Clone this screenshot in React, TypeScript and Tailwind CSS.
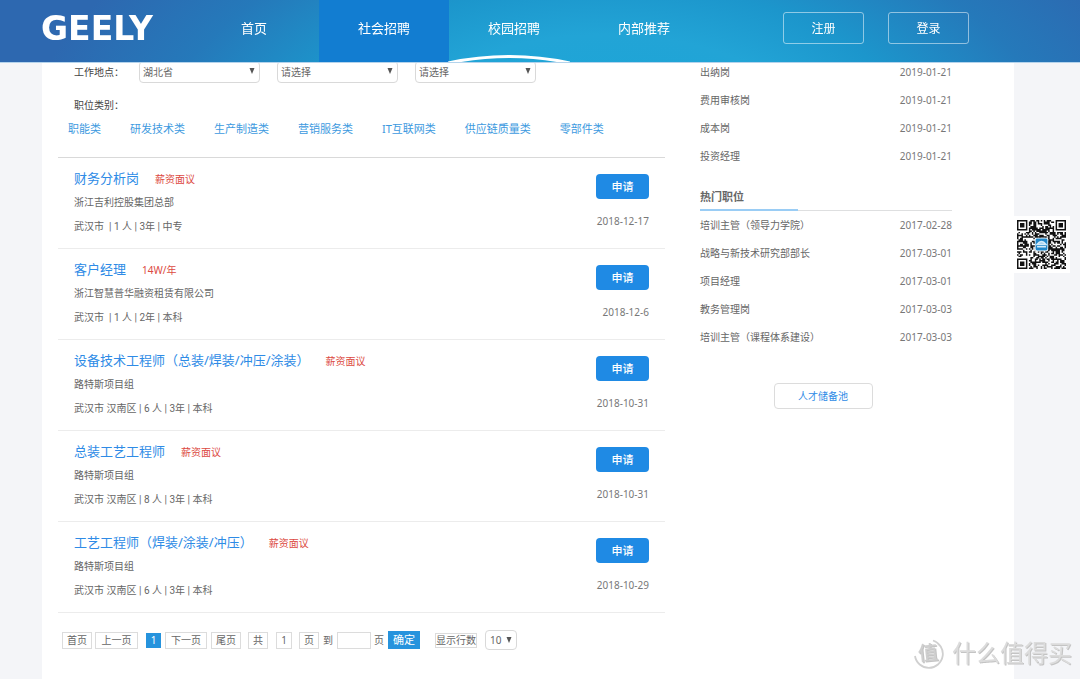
const NAV_ITEMS = ["首页", "社会招聘", "校园招聘", "内部推荐"];

const CATEGORIES = [
  "职能类",
  "研发技术类",
  "生产制造类",
  "营销服务类",
  "IT互联网类",
  "供应链质量类",
  "零部件类",
];

const LOCATIONS = [
  { id: "province", label: "省份", value: "湖北省" },
  { id: "city", label: "城市", value: "请选择" },
  { id: "district", label: "区县", value: "请选择" },
];

const JOBS = [
  {
    title: "财务分析岗",
    salary: "薪资面议",
    company: "浙江吉利控股集团总部",
    info: "武汉市  | 1 人 | 3年 | 中专",
    date: "2018-12-17",
  },
  {
    title: "客户经理",
    salary: "14W/年",
    company: "浙江智慧普华融资租赁有限公司",
    info: "武汉市  | 1 人 | 2年 | 本科",
    date: "2018-12-6",
  },
  {
    title: "设备技术工程师（总装/焊装/冲压/涂装）",
    salary: "薪资面议",
    company: "路特斯项目组",
    info: "武汉市 汉南区 | 6 人 | 3年 | 本科",
    date: "2018-10-31",
  },
  {
    title: "总装工艺工程师",
    salary: "薪资面议",
    company: "路特斯项目组",
    info: "武汉市 汉南区 | 8 人 | 3年 | 本科",
    date: "2018-10-31",
  },
  {
    title: "工艺工程师（焊装/涂装/冲压）",
    salary: "薪资面议",
    company: "路特斯项目组",
    info: "武汉市 汉南区 | 6 人 | 3年 | 本科",
    date: "2018-10-29",
  },
];

const LATEST = [
  { name: "出纳岗", date: "2019-01-21" },
  { name: "费用审核岗", date: "2019-01-21" },
  { name: "成本岗", date: "2019-01-21" },
  { name: "投资经理", date: "2019-01-21" },
];

const HOT = [
  { name: "培训主管（领导力学院）", date: "2017-02-28" },
  { name: "战略与新技术研究部部长", date: "2017-03-01" },
  { name: "项目经理", date: "2017-03-01" },
  { name: "教务管理岗", date: "2017-03-03" },
  { name: "培训主管（课程体系建设）", date: "2017-03-03" },
];

function Arrow() {
  return (
    <svg
      viewBox="0 0 6 6"
      className="pointer-events-none absolute top-[7px] right-[5px] size-1.5 fill-[#555]"
      aria-hidden="true"
    >
      <path d="M.5 0h5L3 6z" />
    </svg>
  );
}

function Header() {
  return (
    <header className="fixed inset-x-0 top-0 z-20 flex h-[63px] items-stretch border-b border-[#b4d3ec] bg-[radial-gradient(ellipse_56%_320px_at_56%_150px,#16a6d8_0%,#22a4d6_36%,#1c96cc_52%,#2579ba_74%,#2d68b0_96%)] pr-[111px] pl-[41px] text-white">
      <a
        href="#"
        className="flex w-[148px] items-center pb-1.5 font-['DejaVu_Sans',sans-serif] text-[33px] leading-none font-bold"
      >
        GEELY
      </a>
      <nav className="flex">
        {NAV_ITEMS.map((item) => (
          <a
            key={item}
            href="#"
            className={`flex w-[130px] items-center justify-center pb-1 text-[13px] ${
              item === "社会招聘" ? "bg-[#127dd1]" : "hover:bg-white/10"
            }`}
          >
            {item}
          </a>
        ))}
      </nav>
      <div className="ml-auto flex gap-6 pt-3">
        {["注册", "登录"].map((label) => (
          <button
            key={label}
            type="button"
            className="h-8 w-[81px] rounded-[3px] border border-white/50 pt-0.5 text-[12px]"
          >
            {label}
          </button>
        ))}
      </div>
      {/* Arc above the content edge */}
      <svg
        viewBox="0 0 122 7"
        className="absolute bottom-0 left-[448px] h-[7px] w-[122px]"
        fill="none"
        aria-hidden="true"
      >
        <path d="M0 8Q61-5 122 8" stroke="#fff" strokeWidth="3" />
      </svg>
    </header>
  );
}

function Filters() {
  return (
    <section className="pt-[3px]">
      <div className="flex items-center pl-4">
        <span className="w-[65px] text-[#444]">工作地点：</span>
        <div className="flex gap-[17px]">
          {LOCATIONS.map(({ id, label, value }) => (
            <div key={id} className="relative">
              <select
                aria-label={label}
                className="block h-[22px] w-[121px] appearance-none rounded border border-[#d9d9d9] bg-white pl-[3px] text-[10px] text-[#666]"
              >
                <option>{value}</option>
              </select>
              <Arrow />
            </div>
          ))}
        </div>
      </div>
      <p className="mt-3 pl-4 leading-5 text-[#444]">职位类别：</p>
      <nav className="mt-1 flex gap-[29px] pb-[18px] pl-2.5 text-[11px] leading-5 text-[#3d9ae0]">
        {CATEGORIES.map((category) => (
          <a key={category} href="#">
            {category}
          </a>
        ))}
      </nav>
    </section>
  );
}

function JobList() {
  return (
    <ul className="border-t border-[#d9d9d9]">
      {JOBS.map((job) => (
        <li
          key={job.title}
          className="flex justify-between border-b border-[#ececec] pt-2 pr-4 pb-2 pl-4"
        >
          <div>
            <div className="flex items-center gap-4 leading-[22px]">
              <a href="#" className="text-[13px] text-[#2e8be6]">
                {job.title}
              </a>
              <span className="pt-0.5 text-[#dc4a42]">{job.salary}</span>
            </div>
            <p className="leading-6">{job.company}</p>
            <p className="font-[Roboto,'Noto_Sans_CJK_SC',sans-serif] leading-[26px] whitespace-pre">
              {job.info}
            </p>
          </div>
          <div className="flex flex-col items-end pt-2">
            <button
              type="button"
              className="h-[25px] w-[53px] rounded bg-[#1f8ae4] pt-px text-[11px] font-medium text-white"
            >
              申请
            </button>
            <time className="mt-3 leading-5 text-[#777]">{job.date}</time>
          </div>
        </li>
      ))}
    </ul>
  );
}

function Pagination() {
  const box = "h-[17px] border border-[#dcdcdc] leading-[15px]";
  return (
    <div className="mt-[17px] flex items-center pl-1">
      <button type="button" className={`${box} w-[30px]`}>首页</button>
      <button type="button" className={`${box} ml-[3px] w-[43px]`}>上一页</button>
      <button type="button" className="ml-2 h-[15px] w-[15px] bg-[#2693dd] text-white">1</button>
      <button type="button" className={`${box} ml-1 w-[42px]`}>下一页</button>
      <button type="button" className={`${box} ml-1 w-[30px]`}>尾页</button>
      <span className={`${box} ml-[7px] w-5 text-center`}>共</span>
      <span className={`${box} ml-2 w-4 text-center`}>1</span>
      <span className={`${box} ml-[7px] w-5 text-center`}>页</span>
      <label htmlFor="page" className="ml-1">到</label>
      <input id="page" className={`${box} ml-1 w-[34px] px-1`} />
      <span className="ml-[3px]">页</span>
      <button type="button" className="ml-1 h-[18px] w-8 bg-[#2693dd] text-[11px] leading-[18px] text-white">
        确定
      </button>
      <label htmlFor="rows" className="ml-[15px] h-[15px] border border-[#dcdcdc] leading-[13px]">
        显示行数
      </label>
      <div className="relative ml-2">
        <select
          id="rows"
          className="block h-5 w-8 appearance-none rounded border border-[#d9d9d9] bg-white pl-1 text-[10px]"
        >
          <option>10</option>
        </select>
        <Arrow />
      </div>
    </div>
  );
}

function PositionList({ items }: { items: { name: string; date: string }[] }) {
  return (
    <ul>
      {items.map(({ name, date }) => (
        <li key={name} className="flex justify-between leading-7">
          <a href="#">{name}</a>
          <time className="text-[#777]">{date}</time>
        </li>
      ))}
    </ul>
  );
}

const QR_SIZE = 33;

// Finder squares in three corners, hashed modules elsewhere
function qrModule(x: number, y: number) {
  const fx = x > QR_SIZE / 2 ? x - (QR_SIZE - 7) : x;
  const fy = y > QR_SIZE / 2 ? y - (QR_SIZE - 7) : y;
  const corner = !(x > QR_SIZE / 2 && y > QR_SIZE / 2);
  if (corner && fx >= -1 && fx <= 7 && fy >= -1 && fy <= 7) {
    const ring = Math.max(Math.abs(fx - 3), Math.abs(fy - 3));
    return ring === 3 || ring <= 1;
  }
  const n = Math.sin(x * 12.9898 + y * 78.233) * 43758.5453;
  return n - Math.floor(n) > 0.46;
}

function QrCode() {
  const cells = Array.from({ length: QR_SIZE * QR_SIZE }, (_, i) => [
    i % QR_SIZE,
    Math.floor(i / QR_SIZE),
  ]);
  const d = cells
    .filter(([x, y]) => qrModule(x, y))
    .map(([x, y]) => `M${x} ${y}h1v1h-1z`)
    .join("");
  return (
    <div className="fixed top-[216px] right-2.5 z-10 bg-white p-1">
      <svg viewBox="0 0 33 33" className="size-[49px]" role="img" aria-label="二维码">
        <path d={d} fill="#111" />
        <rect x="12" y="12" width="9" height="9" rx="1" fill="#fff" />
        <rect x="12.500" y="12.500" width="8" height="8" rx="1" fill="#2187c9" />
        <path d="M13.500 16.500q3-4 6 0zM13.500 18h6" stroke="#d5ecfa" strokeWidth="1" fill="#9fcdea" />
      </svg>
    </div>
  );
}

function Watermark() {
  return (
    <div className="pointer-events-none fixed right-2 bottom-2.5 z-10 flex items-center gap-2 text-[#dcdcdc] [text-shadow:1px_1px_0_#c4c4c4]">
      <div className="relative flex size-8 items-center justify-center text-[20px] leading-none font-medium">
        <svg viewBox="0 0 32 32" className="absolute inset-0 size-8" fill="none" aria-hidden="true">
          <path d="M21 3.500A14 14 0 1 1 3 19" stroke="#d0d0d0" strokeWidth="1.800" />
        </svg>
        <span className="-rotate-6 text-[#cfcfcf]">值</span>
      </div>
      <span className="text-[24px] leading-8">什么值得买</span>
    </div>
  );
}

export default function App() {
  return (
    <div className="min-h-screen bg-[#f4f5f8] pr-[66px] pl-[42px] font-['Noto_Sans','Noto_Sans_CJK_SC',sans-serif] text-[10px] text-[#666]">
      <Header />
      <main className="flex min-h-screen gap-[35px] bg-white pt-[58px] pr-[62px] pl-4">
        <div className="flex-1">
          <Filters />
          <JobList />
          <Pagination />
        </div>
        <aside className="w-[252px]">
          <PositionList items={LATEST} />
          <h2 className="mt-[15px] border-b border-[#dedfe0] text-[11px] leading-6 font-bold">
            <span className="-mb-px block w-[98px] border-b-2 border-[#9acdf5]">热门职位</span>
          </h2>
          <PositionList items={HOT} />
          <div className="mt-8 flex justify-center pr-1.5">
            <button
              type="button"
              className="h-[26px] w-[99px] rounded border border-[#dcdcdc] text-[#2e8be6]"
            >
              人才储备池
            </button>
          </div>
        </aside>
      </main>
      <QrCode />
      <Watermark />
    </div>
  );
}
